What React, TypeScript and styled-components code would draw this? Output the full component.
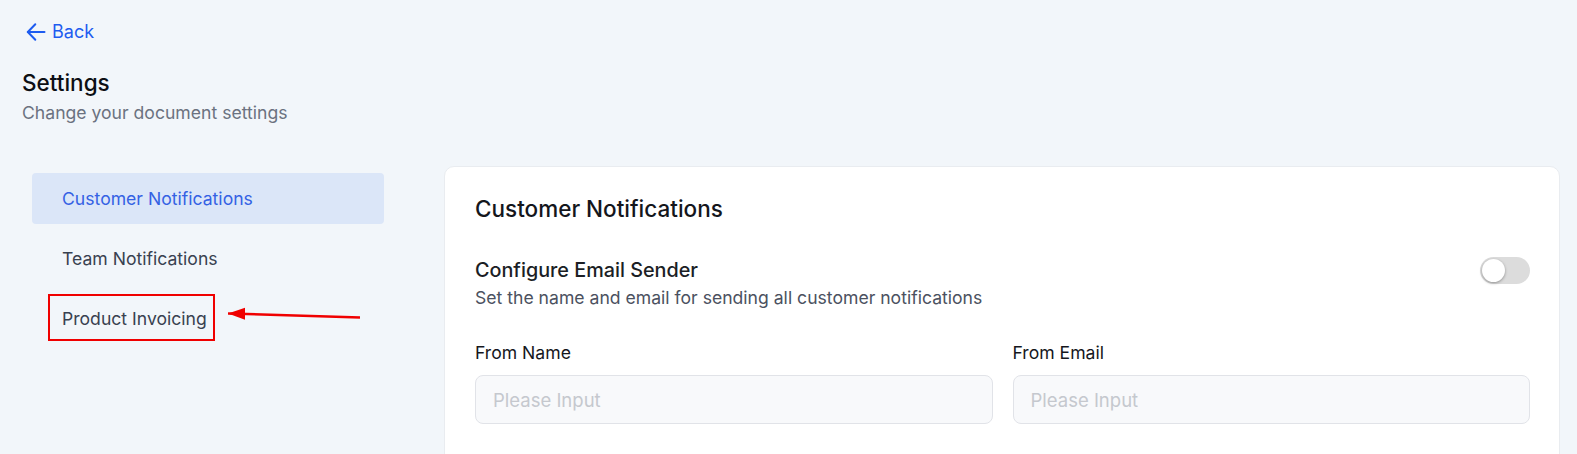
import React from "react";
import styled, { createGlobalStyle } from "styled-components";

const GlobalStyle = createGlobalStyle`
  html, body {
    margin: 0;
    padding: 0;
    background: #f2f6fa;
    font-family: Inter, "Noto Sans", "Liberation Sans", sans-serif;
    -webkit-font-smoothing: antialiased;
  }
  * { box-sizing: border-box; }
`;

const Page = styled.div`
  padding: 20px 17px 0 22px;
  height: 454px;
  overflow: hidden;
`;

const BackLink = styled.a`
  display: inline-flex;
  align-items: center;
  gap: 6px;
  height: 24px;
  margin-left: 4px;
  color: #1e5cf0;
  font-size: 18px;
  line-height: 24px;
  text-decoration: none;
  cursor: pointer;
`;

const Header = styled.header`
  margin-top: 23px;
  display: flex;
  flex-direction: column;
  gap: 4px;
`;

const Title = styled.h1`
  margin: 0;
  font-size: 22.5px;
  line-height: 28px;
  font-weight: 500;
  color: #0d0f14;
`;

const Subtitle = styled.p`
  margin: 0;
  font-size: 17.6px;
  line-height: 24px;
  color: #6b7280;
`;

const Main = styled.div`
  margin-top: 41px;
  display: flex;
  align-items: flex-start;
  gap: 60px;
`;

const Sidebar = styled.nav`
  width: 352px;
  margin-left: 10px;
  padding-top: 7px;
  display: flex;
  flex-direction: column;
  gap: 9px;
`;

const NavItem = styled.div<{ $active?: boolean }>`
  position: relative;
  height: 51px;
  display: flex;
  align-items: center;
  padding-left: 30px;
  border-radius: 4px;
  font-size: 17.6px;
  color: ${(p) => (p.$active ? "#3461e4" : "#394150")};
  background: ${(p) => (p.$active ? "#dbe6f8" : "transparent")};
  cursor: pointer;
`;

const Highlight = styled.span`
  position: absolute;
  left: 16px;
  top: 1px;
  width: 167px;
  height: 47px;
  border: 2.5px solid #f00000;
  pointer-events: none;
`;

const Pointer = styled.svg`
  position: absolute;
  left: 180px;
  top: 10px;
  overflow: visible;
  pointer-events: none;
`;

const Card = styled.section`
  flex: 1;
  height: 320px;
  background: #ffffff;
  border: 1px solid #e9ecf0;
  border-radius: 10px;
  padding: 28px 29px 0 30px;
`;

const CardTitle = styled.h2`
  margin: 0;
  font-size: 22.5px;
  line-height: 28px;
  font-weight: 500;
  color: #14161c;
`;

const SettingRow = styled.div`
  margin-top: 34px;
  display: flex;
  justify-content: space-between;
  align-items: flex-start;
`;

const SettingText = styled.div`
  display: flex;
  flex-direction: column;
  gap: 3px;
`;

const SettingName = styled.h3`
  margin: 0;
  font-size: 19.8px;
  line-height: 26px;
  font-weight: 500;
  color: #1b1e25;
`;

const SettingDesc = styled.p`
  margin: 0;
  font-size: 17.6px;
  line-height: 24px;
  color: #4b5160;
`;

const Toggle = styled.button`
  width: 50px;
  height: 27px;
  border: none;
  border-radius: 14px;
  background: #dcdcdc;
  padding: 2px;
  display: flex;
  align-items: center;
  cursor: pointer;
`;

const Knob = styled.span`
  width: 23px;
  height: 23px;
  border-radius: 50%;
  background: #ffffff;
  box-shadow: 0 1px 3px rgba(0, 0, 0, 0.35);
`;

const Fields = styled.div`
  margin-top: 31px;
  display: grid;
  grid-template-columns: 1fr 1fr;
  gap: 20px;
`;

const Field = styled.label`
  display: flex;
  flex-direction: column;
  gap: 10px;
`;

const FieldLabel = styled.span`
  font-size: 17.6px;
  line-height: 24px;
  color: #15171d;
`;

const Input = styled.input`
  height: 49px;
  width: 100%;
  padding: 0 17px;
  border: 1px solid #e1e3e8;
  border-radius: 8px;
  background: #f8f9fb;
  font-family: inherit;
  font-size: 18.5px;
  color: #1b1e25;
  outline: none;
  &::placeholder {
    color: #c5c8ce;
  }
`;

const navItems = ["Customer Notifications", "Team Notifications", "Product Invoicing"];

export default function App() {
  return (
    <>
      <GlobalStyle />
      <Page>
        <BackLink>
          <svg width="20" height="20" viewBox="0 0 20 20" fill="none" stroke="currentColor" strokeWidth="2" strokeLinecap="round" strokeLinejoin="round">
            <path d="M18.5 10H1.8" />
            <path d="M9.3 2.2 1.8 10 9.3 17.8" />
          </svg>
          Back
        </BackLink>
        <Header>
          <Title>Settings</Title>
          <Subtitle>Change your document settings</Subtitle>
        </Header>
        <Main>
          <Sidebar>
            {navItems.map((item, i) => (
              <NavItem key={item} $active={i === 0}>
                {item}
                {i === 2 && (
                  <>
                    <Highlight />
                    <Pointer width="170" height="20" viewBox="0 0 170 20">
                      <line x1="16" y1="10.5" x2="148" y2="14.5" stroke="#f00000" strokeWidth="2.5" />
                      <polygon points="33,4.8 33,16.8 16,10.5" fill="#f00000" />
                    </Pointer>
                  </>
                )}
              </NavItem>
            ))}
          </Sidebar>
          <Card>
            <CardTitle>Customer Notifications</CardTitle>
            <SettingRow>
              <SettingText>
                <SettingName>Configure Email Sender</SettingName>
                <SettingDesc>Set the name and email for sending all customer notifications</SettingDesc>
              </SettingText>
              <Toggle aria-label="Configure Email Sender">
                <Knob />
              </Toggle>
            </SettingRow>
            <Fields>
              <Field>
                <FieldLabel>From Name</FieldLabel>
                <Input placeholder="Please Input" />
              </Field>
              <Field>
                <FieldLabel>From Email</FieldLabel>
                <Input placeholder="Please Input" />
              </Field>
            </Fields>
          </Card>
        </Main>
      </Page>
    </>
  );
}
